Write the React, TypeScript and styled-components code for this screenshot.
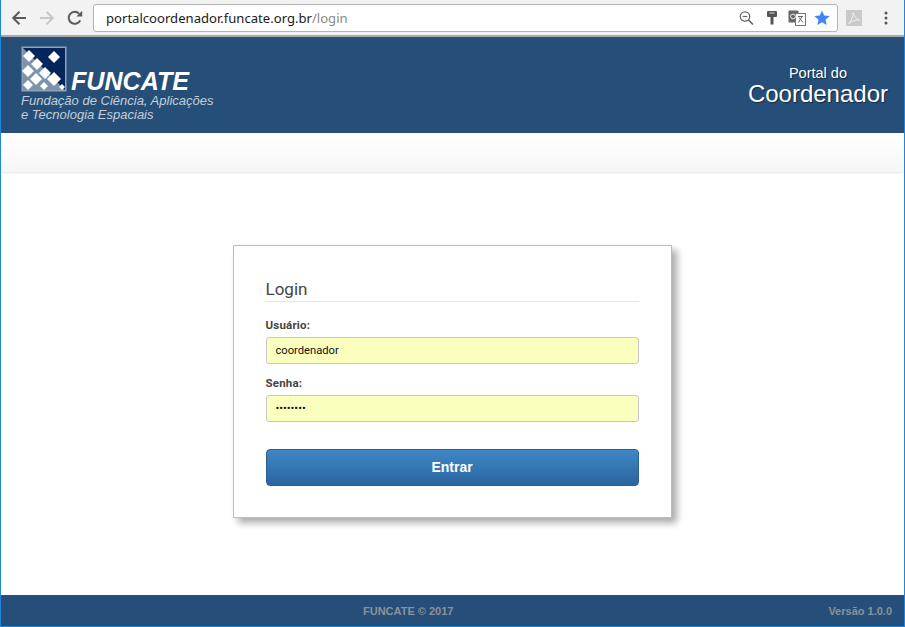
import React, {FC} from 'react';
import styled, {createGlobalStyle} from "styled-components";

const GlobalStyle = createGlobalStyle`
  html, body {
    margin: 0;
    padding: 0;
    height: 100%;
    background: #fff;
    font-family: "Liberation Sans", Arial, sans-serif;
  }
  #root {
    height: 100%;
  }
`
const Page = styled.div`
  box-sizing: border-box;
  width: 905px;
  height: 627px;
  display: flex;
  flex-direction: column;
  border: 1px solid #1f86d9;
  border-top: none;
  overflow: hidden;
  background: #fff;
`
const Toolbar = styled.div`
  flex: 0 0 37px;
  box-sizing: border-box;
  height: 37px;
  display: flex;
  align-items: center;
  padding: 1px 0 0 5px;
  background: #f2f2f2;
  border-bottom: 2px solid #a9a9a9;
`
const NavButton = styled.span`
  width: 26px;
  height: 24px;
  margin-right: 2px;
  display: flex;
  align-items: center;
  justify-content: center;
`
const UrlBar = styled.div`
  box-sizing: border-box;
  width: 745px;
  height: 28px;
  margin-left: 3px;
  padding: 0 3px 0 12px;
  display: flex;
  align-items: center;
  background: #fff;
  border: 1px solid #b4b4b4;
  border-radius: 3px;
`
const UrlText = styled.span`
  flex: 1;
  font-family: "Noto Sans", sans-serif;
  font-size: 13.1px;
  color: #1a1a1a;
`
const UrlPath = styled.span`
  color: #8a8a8a;
`
const UrlIcons = styled.div`
  display: flex;
  align-items: center;
`
const IconSlot = styled.span`
  width: 25px;
  display: flex;
  justify-content: center;
`
const ToolbarEnd = styled.div`
  flex: 1;
  display: flex;
  align-items: center;
  padding-left: 8px;
  gap: 22px;
`
const Banner = styled.header`
  flex: 0 0 96px;
  display: flex;
  justify-content: space-between;
  padding: 9px 16px 0 20px;
  box-sizing: border-box;
  background: #254f78;
`
const LogoBlock = styled.div`
  display: flex;
  flex-direction: column;
`
const LogoRow = styled.div`
  display: flex;
  align-items: flex-end;
  gap: 4px;
`
const LogoName = styled.span`
  font-size: 25.1px;
  font-weight: bold;
  font-style: italic;
  line-height: 22px;
  color: #fff;
`
const Tagline = styled.div`
  margin-top: 2px;
  font-size: 13px;
  font-style: italic;
  line-height: 14px;
  color: #c3cfdb;
`
const PortalTitle = styled.div`
  padding-top: 19px;
  display: flex;
  flex-direction: column;
  align-items: center;
  color: #fff;
  text-shadow: 1px 1px 1px rgba(0, 0, 0, 0.45);
`
const PortalSmall = styled.span`
  font-size: 14.5px;
  line-height: 16px;
`
const PortalBig = styled.span`
  font-size: 24px;
  line-height: 26px;
`
const SubBar = styled.div`
  flex: 0 0 39px;
  background: linear-gradient(#ffffff, #f6f6f6);
  box-shadow: 0 1px 2px rgba(0, 0, 0, 0.11);
  border-radius: 0 0 3px 3px;
`
const Main = styled.main`
  flex: 1;
  display: flex;
  align-items: center;
  justify-content: center;
  padding: 0 1px 4px 0;
`
const Card = styled.form`
  box-sizing: border-box;
  width: 439px;
  height: 273px;
  padding: 33px 32px 0;
  background: #fff;
  border: 1px solid #bcbcbc;
  box-shadow: 5px 5px 7px rgba(0, 0, 0, 0.33);
`
const CardTitle = styled.h2`
  margin: 0 0 17px;
  padding-bottom: 2px;
  height: 20px;
  font-size: 17px;
  font-weight: normal;
  line-height: 20px;
  font-family: "Roboto", sans-serif;
  color: #444;
  border-bottom: 1px solid #e5e5e5;
`
const FieldLabel = styled.label`
  display: block;
  height: 12px;
  margin-bottom: 6px;
  font-family: "Roboto", sans-serif;
  font-size: 11.5px;
  font-weight: bold;
  line-height: 13px;
  letter-spacing: 0.2px;
  color: #444;
`
const FieldInput = styled.input`
  display: block;
  box-sizing: border-box;
  width: 100%;
  height: 27px;
  margin-bottom: 13px;
  padding: 0 9px 1px;
  font-family: "Roboto", sans-serif;
  font-size: 11.2px;
  color: #111;
  background: #fbffbd;
  border: 1px solid #c8c8c8;
  border-radius: 3px;
  outline: none;
`
const SubmitButton = styled.button`
  display: block;
  width: 100%;
  height: 37px;
  margin-top: 27px;
  padding-bottom: 3px;
  font-family: "Liberation Sans", sans-serif;
  font-size: 14px;
  font-weight: bold;
  color: #fff;
  background: linear-gradient(#3f87c6, #2a659f);
  border: 1px solid #2c5f91;
  border-radius: 4px;
`
const Footer = styled.footer`
  flex: 0 0 31px;
  display: flex;
  align-items: center;
  justify-content: space-between;
  padding: 0 12px 0 362px;
  font-size: 11px;
  font-weight: bold;
  color: #8c9299;
  background: #254f78;
`

const BackIcon: FC<{ color: string, flip?: boolean }> = ({color, flip}) => (
    <svg width="16" height="16" viewBox="0 0 16 16" style={flip ? {transform: 'scaleX(-1)'} : undefined}>
        <path d="M15 8H2.5M8.5 1.8 2.2 8l6.3 6.2" fill="none" stroke={color} strokeWidth="2"/>
    </svg>
)

const ReloadIcon = () => (
    <svg width="16" height="16" viewBox="0 0 16 16">
        <path d="M13.2 10.3A6 6 0 1 1 12.2 3.8" fill="none" stroke="#5a5a5a" strokeWidth="2"/>
        <path d="M9.4 6.6h5.8V.8z" fill="#5a5a5a"/>
    </svg>
)

const ZoomIcon = () => (
    <svg width="15" height="16" viewBox="0 0 15 16">
        <circle cx="6" cy="6.5" r="4.7" fill="none" stroke="#666" strokeWidth="1.3"/>
        <path d="M3.7 6.5h4.6" stroke="#666" strokeWidth="1.2"/>
        <path d="M9.5 10 14 14.5" stroke="#666" strokeWidth="1.7"/>
    </svg>
)

const KeyIcon = () => (
    <svg width="12" height="14" viewBox="0 0 12 14">
        <path d="M1 1q0-1 1-1h8q1 0 1 1v4q0 1-1 1H7.500V13.500h-3V6H2q-1 0-1-1z" fill="#555"/>
        <path d="M3.500 2h5" stroke="#ddd" strokeWidth="1"/>
    </svg>
)

const TranslateIcon = () => (
    <svg width="18" height="16" viewBox="0 0 18 16">
        <rect x="0.5" y="0.5" width="10" height="12" rx="1" fill="#666"/>
        <rect x="7.5" y="3.5" width="10" height="12" fill="#fff" stroke="#777"/>
        <circle cx="5" cy="6.5" r="2.4" fill="none" stroke="#eee" strokeWidth="1"/>
        <path d="M10 6.5h5M14 6.5l-3.500 6M11 7.500l4 5" fill="none" stroke="#666" strokeWidth="1"/>
    </svg>
)

const StarIcon = () => (
    <svg width="16" height="16" viewBox="0 0 16 16">
        <path d="M8 .5 10.200 5.600 15.700 6.100 11.500 9.700 12.800 15.100 8 12.300 3.200 15.100 4.500 9.700.3 6.100 5.800 5.600z" fill="#4285f4"/>
    </svg>
)

const PdfIcon = () => (
    <svg width="16" height="16" viewBox="0 0 16 16">
        <rect width="16" height="16" fill="#c9c9c9"/>
        <path d="M2.500 13.500C5 11.500 7.500 6 7 2.800c2 4.500 3 6 6.500 7.200-3.500-.2-7 .8-11 3.500z" fill="none" stroke="#f0f0f0" strokeWidth="1"/>
    </svg>
)

const MenuIcon = () => (
    <svg width="4" height="14" viewBox="0 0 4 14">
        <circle cx="2" cy="2" r="1.500" fill="#555"/>
        <circle cx="2" cy="7" r="1.500" fill="#555"/>
        <circle cx="2" cy="12" r="1.500" fill="#555"/>
    </svg>
)

// losangos brancos do logo, em coordenadas do quadrado de 46px
const diamonds: [number, number, number][] = [
    [8, 10, 6], [16, 18, 6], [24, 27, 6], [7, 25, 6], [15, 33, 6],
    [7, 39, 5], [23, 40, 4], [33, 33, 7], [33, 11, 6], [41, 41, 3],
]

const LogoMark = () => (
    <svg width="46" height="46" viewBox="0 0 46 46">
        <rect x="0.5" y="0.500" width="45" height="45" fill="#8fa3b8"/>
        <rect x="2" y="2" width="42" height="42" fill="#04245c"/>
        <path d="M2 2 44 44H2z" fill="#7d92ad"/>
        {diamonds.map(([x, y, r]) => (
            <path key={`${x}-${y}`} d={`M${x} ${y - r}l${r} ${r}-${r} ${r}-${r}-${r}z`} fill="#fff"/>
        ))}
    </svg>
)

const App: FC = () => {
    return (
        <Page>
            <GlobalStyle/>
            <Toolbar>
                <NavButton><BackIcon color="#5a5a5a"/></NavButton>
                <NavButton><BackIcon color="#c8c8c8" flip/></NavButton>
                <NavButton><ReloadIcon/></NavButton>
                <UrlBar>
                    <UrlText>portalcoordenador.funcate.org.br<UrlPath>/login</UrlPath></UrlText>
                    <UrlIcons>
                        <IconSlot><ZoomIcon/></IconSlot>
                        <IconSlot><KeyIcon/></IconSlot>
                        <IconSlot><TranslateIcon/></IconSlot>
                        <IconSlot><StarIcon/></IconSlot>
                    </UrlIcons>
                </UrlBar>
                <ToolbarEnd>
                    <PdfIcon/>
                    <MenuIcon/>
                </ToolbarEnd>
            </Toolbar>
            <Banner>
                <LogoBlock>
                    <LogoRow>
                        <LogoMark/>
                        <LogoName>FUNCATE</LogoName>
                    </LogoRow>
                    <Tagline>
                        Fundação de Ciência, Aplicações<br/>
                        e Tecnologia Espaciais
                    </Tagline>
                </LogoBlock>
                <PortalTitle>
                    <PortalSmall>Portal do</PortalSmall>
                    <PortalBig>Coordenador</PortalBig>
                </PortalTitle>
            </Banner>
            <SubBar/>
            <Main>
                <Card>
                    <CardTitle>Login</CardTitle>
                    <FieldLabel>Usuário:</FieldLabel>
                    <FieldInput defaultValue="coordenador"/>
                    <FieldLabel>Senha:</FieldLabel>
                    <FieldInput type="password" defaultValue="password"/>
                    <SubmitButton type="button">Entrar</SubmitButton>
                </Card>
            </Main>
            <Footer>
                <span>FUNCATE © 2017</span>
                <span>Versão 1.0.0</span>
            </Footer>
        </Page>
    );
};

export default App
